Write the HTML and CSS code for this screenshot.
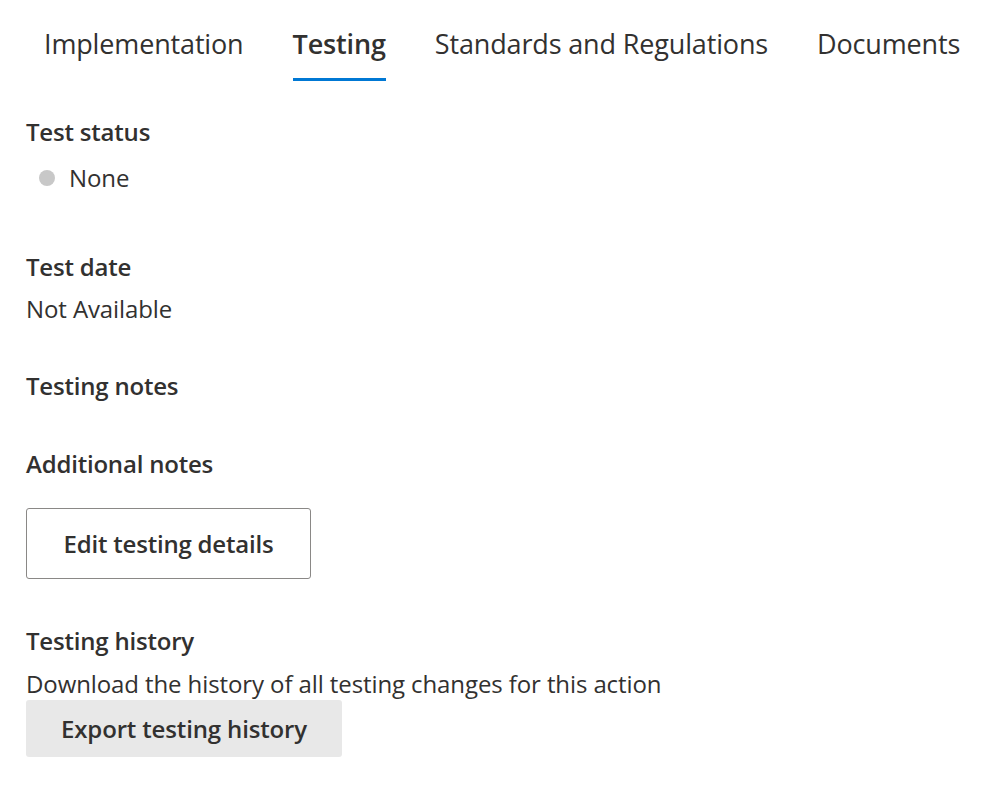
FILE: index.html
```html
<!DOCTYPE html>
<html lang="en">
<head>
<meta charset="utf-8">
<title>Testing</title>
<link rel="stylesheet" href="styles.css">
</head>
<body>
<div class="page">
  <nav class="tabs">
    <div class="tab">Implementation</div>
    <div class="tab active">Testing</div>
    <div class="tab">Standards and Regulations</div>
    <div class="tab">Documents</div>
  </nav>
  <section class="content">
    <div class="field status">
      <h3 class="label">Test status</h3>
      <div class="status-row"><span class="dot"></span><span class="value">None</span></div>
    </div>
    <div class="field date">
      <h3 class="label">Test date</h3>
      <div class="value">Not Available</div>
    </div>
    <div class="field notes">
      <h3 class="label">Testing notes</h3>
    </div>
    <div class="field addl">
      <h3 class="label">Additional notes</h3>
    </div>
    <button class="btn-outline">Edit testing details</button>
    <div class="field history">
      <h3 class="label">Testing history</h3>
      <div class="value">Download the history of all testing changes for this action</div>
      <button class="btn-gray">Export testing history</button>
    </div>
  </section>
</div>
</body>
</html>
```
FILE: styles.css
```css
* { box-sizing: border-box; }
html, body { margin: 0; padding: 0; background: #ffffff; }
body {
  font-family: "Open Sans", "Noto Sans", "Liberation Sans", sans-serif;
  color: #323130;
}
.page { padding: 0 0 0 26px; }
.tabs {
  display: flex;
  gap: 49px;
  padding: 22px 0 0 18px;
  height: 81px;
}
.tab {
  font-size: 27px;
  line-height: 44px;
  height: 59px;
  color: #323130;
  letter-spacing: -0.15px;
}
.tab.active {
  font-weight: 600;
  border-bottom: 3.5px solid #0078d4;
}
.content { padding-top: 37px; }
.label {
  margin: 0;
  font-size: 24px;
  font-weight: 600;
  line-height: 28px;
  letter-spacing: -0.2px;
}
.value {
  font-size: 24px;
  line-height: 32px;
  letter-spacing: -0.1px;
}
.status-row { display: flex; align-items: center; gap: 14px; padding: 16px 0 0 13px; }
.dot { width: 16px; height: 16px; border-radius: 50%; background: #c8c8c8; }
.status { height: 135px; }
.date .value { margin-top: 12px; }
.date { height: 119px; }
.notes { height: 78px; }
.addl { height: 40px; }
.btn-outline {
  display: block;
  margin: 18px 0 0 0;
  width: 285px;
  height: 71px;
  background: #ffffff;
  border: 1.5px solid #8a8886;
  border-radius: 3px;
  font-family: inherit;
  font-size: 24px;
  font-weight: 600;
  color: #323130;
  letter-spacing: -0.2px;
}
.history { margin-top: 48px; }
.history .value { margin-top: 13px; }
.btn-gray {
  display: block;
  width: 316px;
  height: 57px;
  background: #e8e8e8;
  border: none;
  border-radius: 3px;
  font-family: inherit;
  font-size: 24px;
  font-weight: 600;
  color: #323130;
  letter-spacing: -0.15px;
}
```
